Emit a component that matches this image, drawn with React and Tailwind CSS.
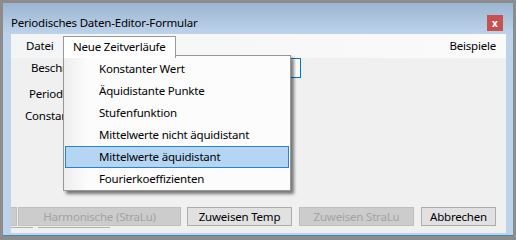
import React from "react";

const font = { fontFamily: '"Noto Sans", "Open Sans", sans-serif' };

function Btn({ children, disabled, className = "" }) {
  return (
    <div
      className={
        "h-[19px] flex items-center justify-center text-[11.5px] tracking-[-0.2px] leading-none border " +
        (disabled
          ? "bg-[#cccccc] border-[#bfbfbf] text-[#a3a3a3] "
          : "bg-[#e1e1e1] border-[#adadad] text-[#000] ") +
        className
      }
    >
      {children}
    </div>
  );
}

export default function App() {
  const items = [
    "Konstanter Wert",
    "Äquidistante Punkte",
    "Stufenfunktion",
    "Mittelwerte nicht äquidistant",
    "Mittelwerte äquidistant",
    "Fourierkoeffizienten",
  ];
  return (
    <div
      className="w-[516px] h-[240px] bg-[#8c8c8c] pt-[3px] pl-[3px] pr-[3px] pb-[4px] overflow-hidden"
      style={font}
    >
      <div className="w-full h-full flex flex-col bg-[#bcd3eb] border-b border-[#3a8bb0]">
        {/* title bar */}
        <div className="h-[31px] shrink-0 flex items-center pl-[8px] pr-[10px] bg-gradient-to-b from-[#9bb5d2] to-[#bdd3ea]">
          <span className="text-[11.5px] tracking-[-0.2px] text-black pt-[8px]">Periodisches Daten-Editor-Formular</span>
          <div className="ml-auto mt-[9px] w-[16px] h-[16px] bg-[#c75050] flex items-center justify-center text-white text-[10px] font-bold leading-none pb-[1px]">
            x
          </div>
        </div>
        {/* client */}
        <div className="flex-1 ml-[8px] mr-[7px] mb-[2px] bg-[#f0f0f0] flex flex-col relative">
          {/* menu bar */}
          <div className="h-[24px] shrink-0 flex items-start bg-gradient-to-r from-[#f4f5f6] to-[#fafafa] text-[11.5px] tracking-[-0.2px] text-black">
            <div className="h-[19px] mt-[2px] flex items-center pl-[15px] w-[52px]">Datei</div>
            <div className="relative mt-[2px] h-[22px] w-[113px] border border-b-0 border-[#999999] bg-white flex items-center pl-[9px] pb-[2px] z-20">
              Neue Zeitverläufe
            </div>
            <div className="ml-auto h-[19px] mt-[2px] flex items-center pr-[10px]">Beispiele</div>
          </div>
          {/* form */}
          <div className="flex-1 flex flex-col text-[11.5px] tracking-[-0.2px] text-black">
            <div className="h-[20px] flex items-center">
              <div className="ml-[20px] w-[32px] overflow-hidden whitespace-nowrap">Beschreibung:</div>
              <div className="ml-auto mr-[205px] w-[200px] h-[20px] bg-white border border-[#0078d7]"></div>
            </div>
            <div className="mt-[6px] h-[20px] flex items-center">
              <div className="ml-[18px] w-[34px] overflow-hidden whitespace-nowrap">Periodendauer:</div>
            </div>
            <div className="mt-[2px] h-[20px] flex items-center">
              <div className="ml-[14px] w-[38px] overflow-hidden whitespace-nowrap">Constant:</div>
            </div>
            <div className="mt-auto flex items-start">
              <div className="w-[6px] h-[19px] bg-[#cccccc] border border-l-0 border-[#bfbfbf]"></div>
              <Btn disabled className="ml-[1px] w-[163px]">Harmonische (StraLu)</Btn>
              <Btn className="ml-[6px] w-[105px]">Zuweisen Temp</Btn>
              <Btn disabled className="ml-[7px] w-[115px]">Zuweisen StraLu</Btn>
              <Btn className="ml-[7px] w-[75px]">Abbrechen</Btn>
            </div>
            <div className="h-[7px] flex items-start pt-[1px]">
              <div className="w-[22px] h-px bg-[#b0b0b0]"></div>
              <div className="ml-[5px] w-[72px] h-px bg-[#b0b0b0]"></div>
            </div>
          </div>

          {/* dropdown */}
          <div className="absolute left-[52px] top-[21px] w-[228px] h-[136px] bg-[#fcfcfc] border border-[#979797] shadow-[3px_3px_3px_rgba(0,0,0,0.5)] z-10 flex">
            <div className="w-[24px] shrink-0 bg-gradient-to-r from-[#eeeeee] to-[#fcfcfc]"></div>
            <div className="absolute left-[1px] right-[1px] top-[2px] flex flex-col">
              {items.map((t, i) => (
                <div
                  key={t}
                  className={
                    "h-[22px] flex items-center pl-[33px] text-[11.5px] tracking-[-0.2px] text-black border " +
                    (i === 4 ? "bg-[#b5d6f3] border-[#2a80d8]" : "border-transparent")
                  }
                >
                  {t}
                </div>
              ))}
            </div>
          </div>
        </div>
      </div>
    </div>
  );
}
